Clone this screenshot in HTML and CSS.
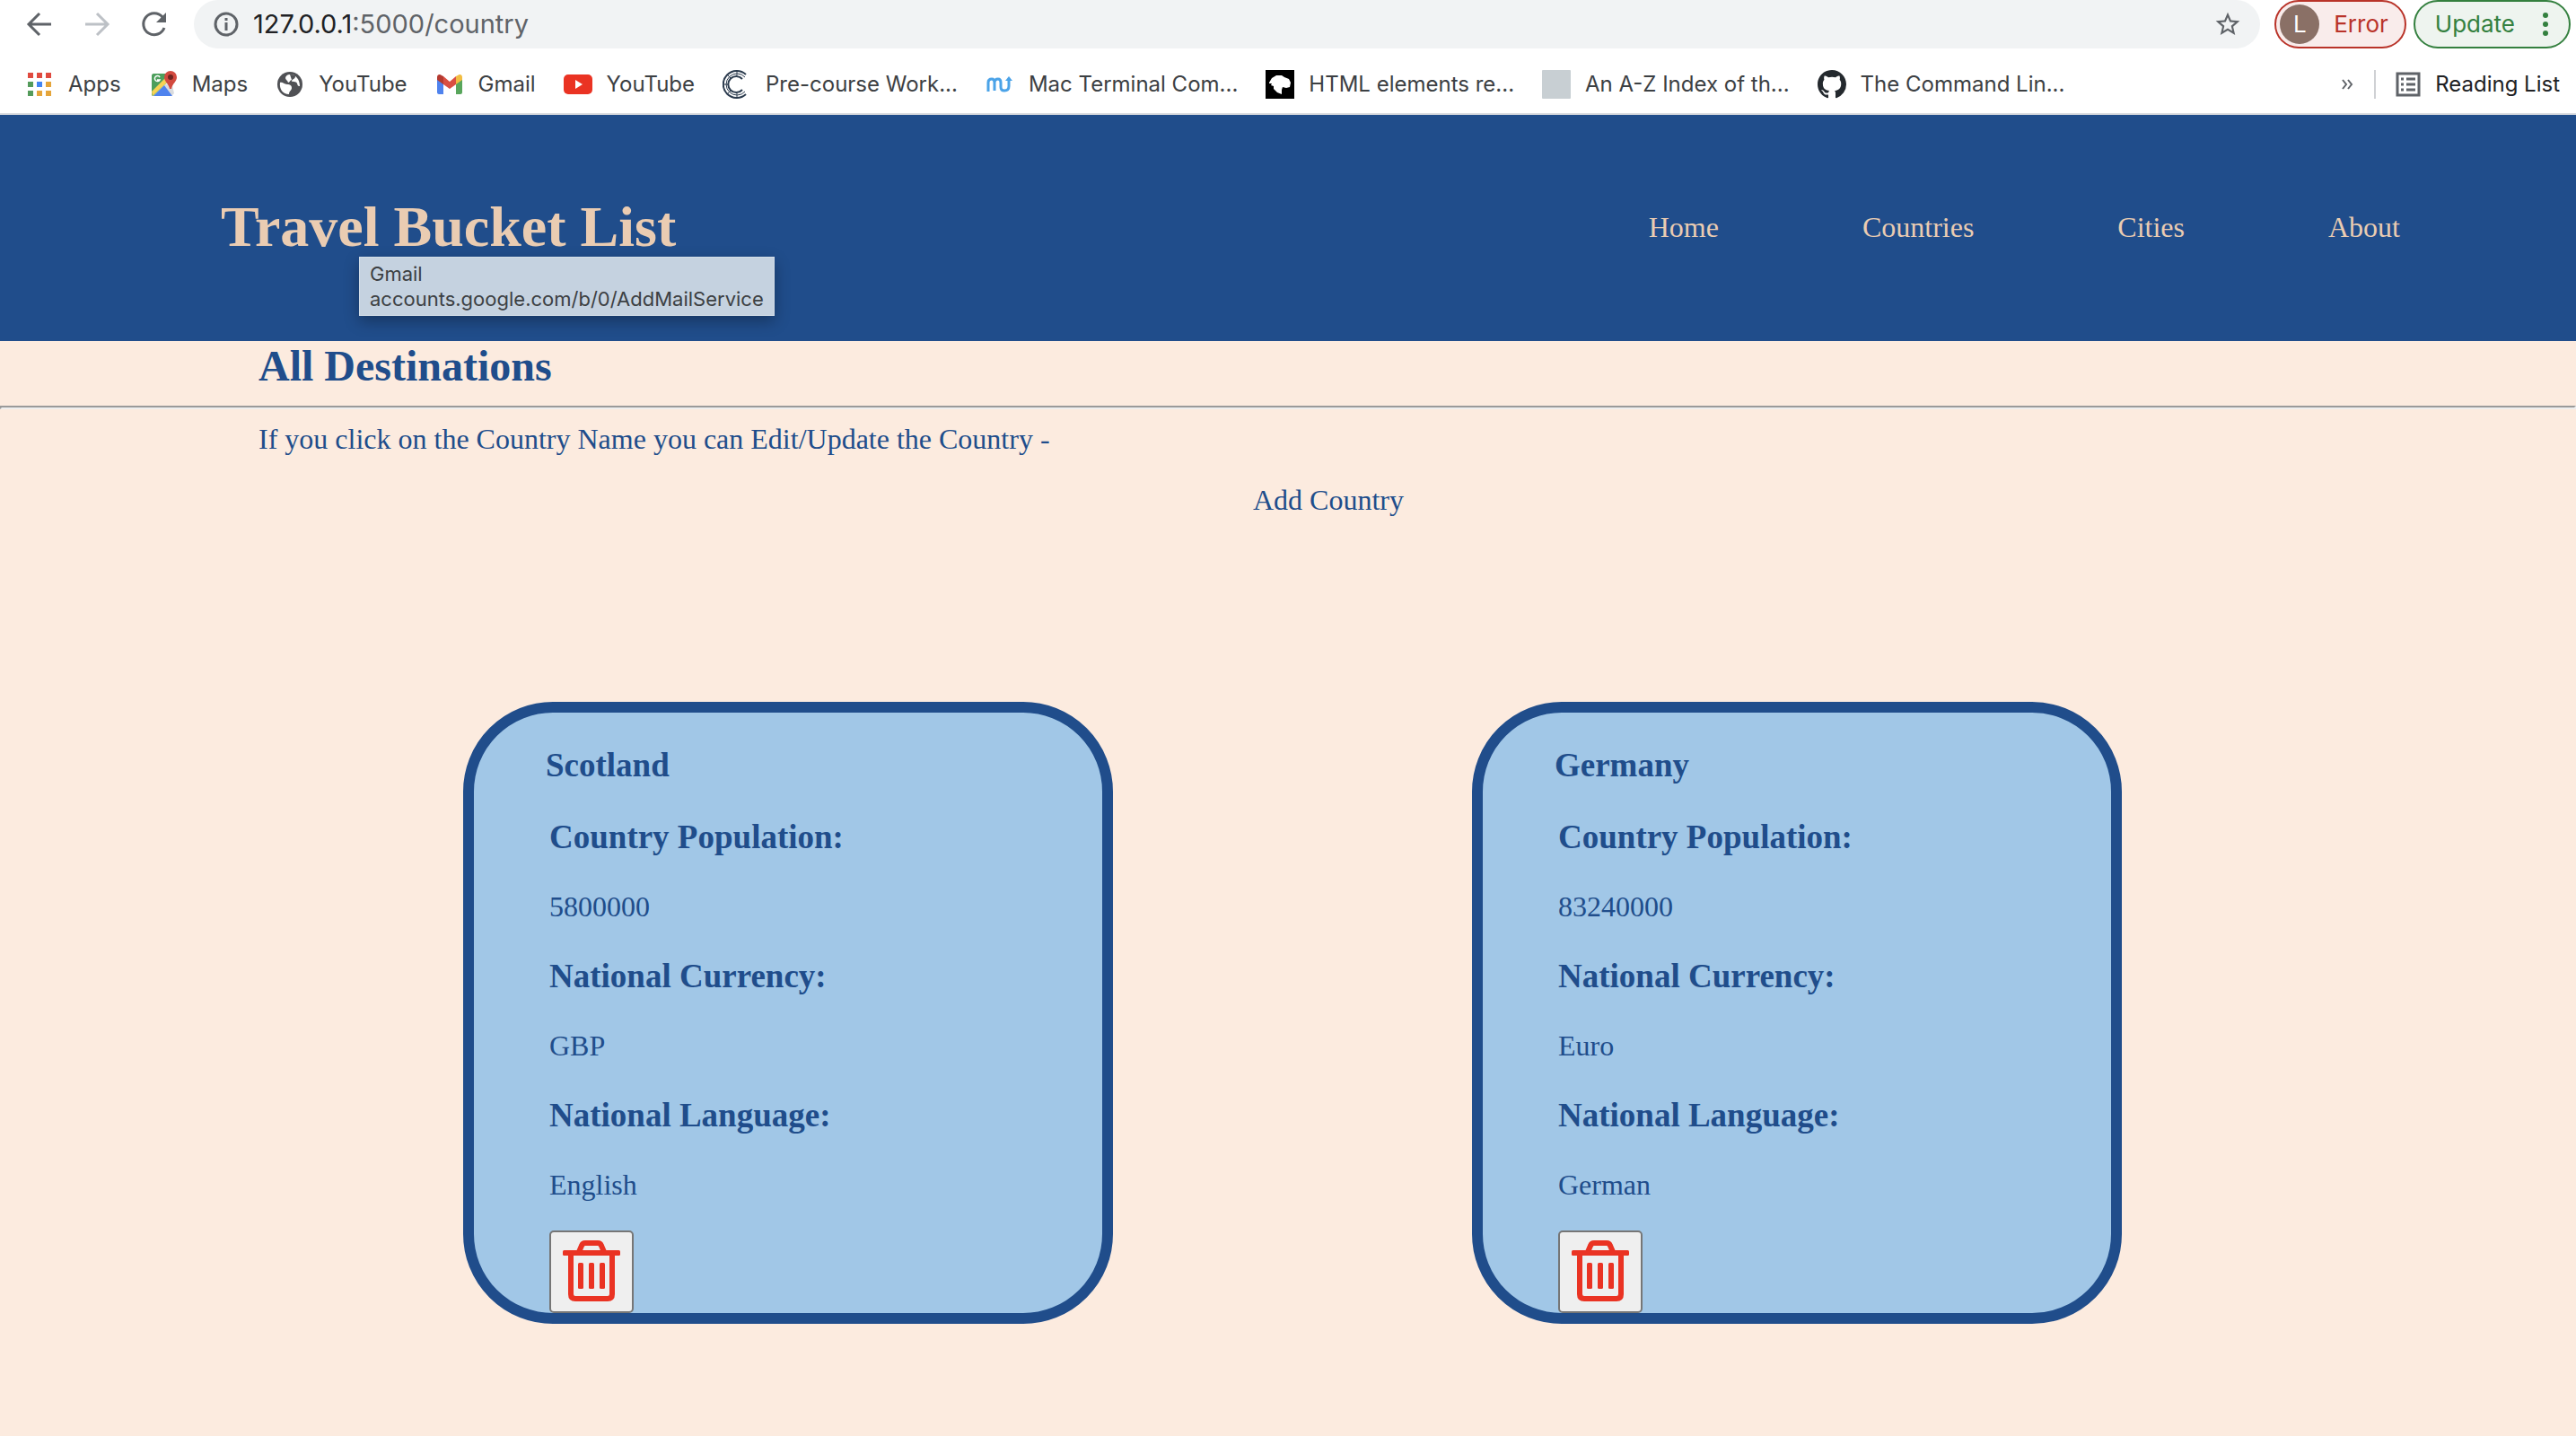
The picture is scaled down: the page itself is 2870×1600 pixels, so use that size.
FILE: index.html
```html
<!DOCTYPE html>
<html lang="en">
<head>
<meta charset="utf-8">
<title>Travel Bucket List</title>
<link rel="stylesheet" href="styles.css">
</head>
<body>
<div class="browser">
  <div class="toolbar">
    <button class="tool" aria-label="Back"><svg width="32" height="32" viewBox="0 0 32 32" fill="none" stroke="#5f6368" stroke-width="3"><path d="M29 16H5M16 4L4 16l12 12"/></svg></button>
    <button class="tool" aria-label="Forward"><svg width="32" height="32" viewBox="0 0 32 32" fill="none" stroke="#bdc1c6" stroke-width="3"><path d="M3 16h24M16 4l12 12-12 12"/></svg></button>
    <button class="tool" aria-label="Reload"><svg width="32" height="32" viewBox="0 0 32 32" fill="none" stroke="#5f6368" stroke-width="3"><path d="M25 8A12 12 0 1 0 27 20"/><path d="M29 3v11H18z" fill="#5f6368" stroke="none"/></svg></button>
    <div class="address">
      <svg width="28" height="28" viewBox="0 0 28 28" fill="none" stroke="#5f6368" stroke-width="3"><circle cx="14" cy="14" r="12"/><path d="M14 12v9M14 7v3"/></svg>
      <span class="url"><span class="host">127.0.0.1</span>:5000/country</span>
      <button class="tool" aria-label="Bookmark this page"><svg width="32" height="32" viewBox="0 0 24 24" fill="#5f6368"><path d="M22 9.24l-7.19-.62L12 2 9.19 8.63 2 9.24l5.46 4.73L5.82 21 12 17.27 18.18 21l-1.63-7.03L22 9.24zM12 15.4l-3.76 2.27 1-4.28-3.32-2.88 4.38-.38L12 6.1l1.71 4.04 4.38.38-3.32 2.88 1 4.28L12 15.4z"/></svg></button>
    </div>
    <button class="chip error"><span class="avatar">L</span>Error</button>
    <button class="chip update">Update<svg width="8" height="28" viewBox="0 0 8 28" fill="#34803f"><circle cx="4" cy="4" r="3"/><circle cx="4" cy="14" r="3"/><circle cx="4" cy="24" r="3"/></svg></button>
  </div>
  <nav class="bookmarks" aria-label="Bookmarks">
    <a href="#" class="mark"><svg width="32" height="32" viewBox="0 0 32 32"><path fill="#e04a3f" d="M3 3h6v6H3zM13 3h6v6h-6zM23 3h6v6h-6z"/><path fill="#549b5b" d="M3 13h6v6H3zM3 23h6v6H3z"/><path fill="#4285f4" d="M13 13h6v6h-6z"/><path fill="#e5a53b" d="M23 13h6v6h-6zM13 23h6v6h-6zM23 23h6v6h-6z"/></svg>Apps</a>
    <a href="#" class="mark"><svg width="32" height="32" viewBox="0 0 32 32"><path fill="#4d9f5c" d="M5 4h20v5L5 29c-2 0-2-1-2-2V6c0-1 1-2 2-2z"/><path fill="#d9dbde" d="M17 17l8-4 3 13-3 3z"/><path fill="#4f83ee" d="M5 29l12-12 9 12z"/><path fill="#f7d355" d="M3 24L20 7l3 4L4 29z"/><path fill="#d24a3f" d="M24 1a7 7 0 0 1 7 7c0 5-5 7-6 13h-2c-1-6-6-8-6-13a7 7 0 0 1 7-7z"/><circle cx="24" cy="8" r="3" fill="#6f2420"/><path d="M12 8a3 3 0 1 0 0 3H9" fill="none" stroke="#fff" stroke-width="1.5"/></svg>Maps</a>
    <a href="#" class="mark"><svg width="32" height="32" viewBox="0 0 32 32"><circle cx="16" cy="16" r="14" fill="#505155"/><path fill="#fff" d="M5 14c3-1 4 2 8 2 3 0 5 1 5 4s-3 3-3 7C8 27 4 21 5 14zM16 5c2 0 4 0 6 2 0 3-3 3-4 5 0 2 5 0 6 3s1 3 3 3c0-7-4-13-11-13zM16 5c-3 0-5 2-5 4s3 3 3 5c2 0 2-3 4-3z"/></svg>YouTube</a>
    <a href="#" class="mark"><svg width="32" height="32" viewBox="0 0 32 32"><path fill="#4f83ee" d="M2 10l7 5v12H4c-1 0-2-1-2-2z"/><path fill="#58a65c" d="M30 10l-7 5v12h5c1 0 2-1 2-2z"/><path fill="#d94f42" d="M9 7l7 6 7-6v9l-7 5-7-5z"/><path fill="#b43a30" d="M2 8c0-3 3-4 5-2l2 1v9l-7-5z"/><path fill="#f2bd42" d="M30 8c0-3-3-4-5-2l-2 1v9l7-5z"/></svg>Gmail</a>
    <a href="#" class="mark"><svg width="32" height="32" viewBox="0 0 32 32"><rect y="5" width="32" height="22" rx="5" fill="#ea3323"/><path fill="#fff" d="M13 11l8 5-8 5z"/></svg>YouTube</a>
    <a href="#" class="mark"><svg width="32" height="32" viewBox="0 0 32 32" fill="none" stroke="#2a3a4d"><path stroke-width="2" d="M26 5a15 15 0 1 0 0 22M22 10a9 9 0 1 0 0 12"/><path d="M25 8a12 12 0 1 0 0 16M1 16h6M16 1v5M16 26v5M6 6l4 4M6 26l4-4"/></svg>Pre-course Work...</a>
    <a href="#" class="mark"><svg width="32" height="32" viewBox="0 0 32 32" fill="none" stroke="#4ba3e8" stroke-width="3"><path d="M3 24V14q0-4 4-4 3 0 3 4v9M10 14q0-4 4-4 3 0 3 4v5q0 4 4 4 5 0 5-5V10"/><path d="M22 12l4-5 4 5z" fill="#4ba3e8" stroke="none"/></svg>Mac Terminal Com...</a>
    <a href="#" class="mark"><svg width="32" height="32" viewBox="0 0 32 32"><path d="M0 0h32v32H0z"/><path fill="#fff" d="M4 14l3-5 5-3h6l3 2 5 2 2 4-1 5-4 1-4-1-1 3v5l-5-2-4-4v-3l-3-1 1-2-3 0z"/></svg>HTML elements re...</a>
    <a href="#" class="mark"><svg width="32" height="32" viewBox="0 0 32 32"><rect width="32" height="32" rx="1" fill="#c8cfd3"/></svg>An A-Z Index of th...</a>
    <a href="#" class="mark"><svg width="32" height="32" viewBox="0 0 16 16" fill="#24292e"><path d="M8 0C3.58 0 0 3.58 0 8c0 3.54 2.29 6.53 5.47 7.59.4.07.55-.17.55-.38 0-.19-.01-.82-.01-1.49-2.01.37-2.53-.49-2.69-.94-.09-.23-.48-.94-.82-1.13-.28-.15-.68-.52-.01-.53.63-.01 1.08.58 1.23.82.72 1.21 1.87.87 2.33.66.07-.52.28-.87.51-1.07-1.78-.2-3.64-.89-3.64-3.95 0-.87.31-1.59.82-2.15-.08-.2-.36-1.02.08-2.12 0 0 .67-.21 2.2.82.64-.18 1.32-.27 2-.27s1.36.09 2 .27c1.53-1.04 2.2-.82 2.2-.82.44 1.1.16 1.92.08 2.12.51.56.82 1.27.82 2.15 0 3.07-1.87 3.75-3.65 3.95.29.25.54.73.54 1.48 0 1.07-.01 1.93-.01 2.2 0 .21.15.46.55.38A8.01 8.01 0 0 0 16 8c0-4.42-3.58-8-8-8z"/></svg>The Command Lin...</a>
    <button class="tool more" aria-label="More bookmarks"><svg width="14" height="14" viewBox="0 0 14 14" fill="none" stroke="#5f6368" stroke-width="2"><path d="M2 2l4 5-4 5M8 2l4 5-4 5"/></svg></button>
    <a href="#" class="mark reading"><svg width="28" height="28" viewBox="0 0 28 28" fill="none" stroke="#5f6368" stroke-width="3"><path d="M2 2h24v24H2zM6 8h3M12 8h10M6 14h3M12 14h10M6 20h3M12 20h10"/></svg>Reading List</a>
  </nav>
</div>

<header class="banner">
  <h1 class="title">Travel Bucket List
    <span class="tip" role="tooltip">Gmail<br>accounts.google.com/b/0/AddMailService</span>
  </h1>
  <nav class="menu"><a href="#">Home</a><a href="#">Countries</a><a href="#">Cities</a><a href="#">About</a></nav>
</header>

<main>
  <h2 class="heading">All Destinations</h2>
  <hr class="rule">
  <p class="intro">If you click on the Country Name you can Edit/Update the Country -</p>
  <p class="add"><a href="#">Add Country</a></p>
  <div class="cards">
    <article class="card">
      <h3 class="name"><a href="#">Scotland</a></h3>
      <h3>Country Population:</h3>
      <p>5800000</p>
      <h3>National Currency:</h3>
      <p>GBP</p>
      <h3>National Language:</h3>
      <p>English</p>
      <button class="delete" aria-label="Delete Scotland"><svg width="64" height="72" viewBox="0 0 64 72" fill="#ea3323"><path fill="none" stroke="#ea3323" stroke-width="6" d="M18 14l3-7q1-3 4-3h14q3 0 4 3l3 7M9 16v45q0 5 5 5h36q5 0 5-5V16"/><rect y="12" width="64" height="6" rx="1.5"/><rect x="17" y="26" width="6" height="29" rx="1.5"/><rect x="29" y="26" width="6" height="29" rx="1.5"/><rect x="41" y="26" width="6" height="29" rx="1.5"/></svg></button>
    </article>
    <article class="card">
      <h3 class="name"><a href="#">Germany</a></h3>
      <h3>Country Population:</h3>
      <p>83240000</p>
      <h3>National Currency:</h3>
      <p>Euro</p>
      <h3>National Language:</h3>
      <p>German</p>
      <button class="delete" aria-label="Delete Germany"><svg width="64" height="72" viewBox="0 0 64 72" fill="#ea3323"><path fill="none" stroke="#ea3323" stroke-width="6" d="M18 14l3-7q1-3 4-3h14q3 0 4 3l3 7M9 16v45q0 5 5 5h36q5 0 5-5V16"/><rect y="12" width="64" height="6" rx="1.5"/><rect x="17" y="26" width="6" height="29" rx="1.5"/><rect x="29" y="26" width="6" height="29" rx="1.5"/><rect x="41" y="26" width="6" height="29" rx="1.5"/></svg></button>
    </article>
  </div>
</main>
</body>
</html>
```
FILE: styles.css
```css
* { box-sizing: border-box; }
body {
  margin: 0;
  background: #fcebdf;
  color: #204d8b;
  font: 32px/36px "Liberation Serif", "Times New Roman", serif;
}
a { color: inherit; text-decoration: none; }
h1, h2, h3, p { margin: 0; }
svg { display: block; flex: none; }

.browser {
  background: #fff;
  border-bottom: 2px solid #dadce0;
  color: #3c4043;
  font: 24px/32px Inter, "Liberation Sans", sans-serif;
}
.toolbar {
  display: flex;
  align-items: center;
  gap: 32px;
  height: 54px;
  padding: 0 6px 0 28px;
}
.tool { padding: 0; border: 0; background: none; }
.address {
  flex: 1;
  display: flex;
  align-items: center;
  gap: 16px;
  height: 54px;
  padding: 0 20px 0 22px;
  margin: 0 -16px 0 -4px;
  border-radius: 27px;
  background: #f1f3f4;
}
.url { flex: 1; color: #5f6368; font-size: 29px; }
.host { color: #202124; }
.chip {
  display: flex;
  align-items: center;
  height: 54px;
  border: 2px solid;
  border-radius: 27px;
  font: 26px/32px Inter, "Liberation Sans", sans-serif;
}
.error { gap: 16px; padding: 0 18px 0 4px; margin-right: -24px; background: #f9eceb; color: #b93329; }
.update { gap: 30px; padding: 0 22px 0 22px; background: #eef4ef; color: #34803f; }
.avatar {
  width: 44px;
  height: 44px;
  border-radius: 50%;
  background: #8a7066;
  color: #fff;
  line-height: 44px;
  text-align: center;
}
.bookmarks {
  display: flex;
  align-items: center;
  gap: 31px;
  height: 72px;
  padding: 14px 18px 6px 28px;
  white-space: nowrap;
}
.mark { display: flex; align-items: center; gap: 16px; }
.more { margin-left: auto; }
.reading {
  padding-left: 22px;
  margin-left: -8px;
  border-left: 2px solid #cfd1d4;
  color: #202124;
}

.banner {
  display: flex;
  align-items: center;
  justify-content: space-between;
  padding: 87px 196px 89px 246px;
  background: #204d8b;
  color: #eaccb2;
}
.title { position: relative; font-size: 64px; line-height: 76px; }
.tip {
  position: absolute;
  top: 71px;
  left: 154px;
  padding: 4px 11px;
  border: 1px solid #d3dde7;
  background: #c5d2e0;
  box-shadow: 0 6px 16px rgba(0, 0, 0, .3);
  color: #3c4043;
  font: 22px/28px Inter, "Liberation Sans", sans-serif;
  white-space: nowrap;
}
.menu { display: flex; gap: 160px; }

.heading { padding-left: 288px; font-size: 48px; line-height: 56px; }
.rule { margin: 16px 0 15px; border: 2px solid; border-color: #9a9a9a #eee #eee #9a9a9a; }
.intro { padding-left: 288px; margin-bottom: 32px; }
.add { padding-left: 90px; text-align: center; }
.cards {
  display: grid;
  grid-template-columns: 1fr 1fr;
  gap: 400px;
  padding: 207px 506px 124px 516px;
}
.card {
  padding: 0 84px;
  border: 12px solid #204d8b;
  border-radius: 100px;
  background: #a1c7e7;
}
.card h3 { margin: 38px 0; font-size: 37px; line-height: 42px; }
.card p { margin: 32px 0; line-height: 37px; }
.card .name { margin-left: -4px; }
.delete {
  display: block;
  padding: 8px 13px;
  border: 2px solid #767676;
  border-radius: 5px;
  background: #efefef;
}
```
